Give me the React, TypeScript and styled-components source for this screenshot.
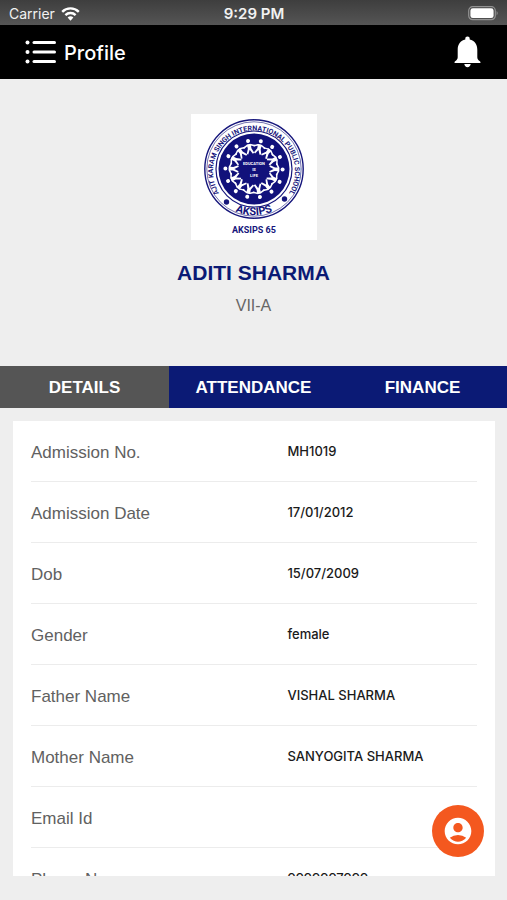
import React, { useState } from "react";
import styled, { createGlobalStyle } from "styled-components";
import { MdAccountCircle } from "react-icons/md";

const navy = "#0b1a75";
const slate = "#555555";
const sans = `"Liberation Sans", Arial, sans-serif`;
const inter = `Inter, "Liberation Sans", sans-serif`;

const GlobalStyle = createGlobalStyle`
  *, *::before, *::after { box-sizing: border-box; }
  body { margin: 0; background: #eeeeee; font-family: ${sans}; }
  button { border: 0; padding: 0; background: none; font: inherit; color: inherit; cursor: pointer; }
`;

const Page = styled.div`
  display: flex;
  flex-direction: column;
  height: 100vh;
`;

const StatusBar = styled.div`
  display: grid;
  grid-template-columns: 1fr auto 1fr;
  align-items: center;
  flex: none;
  height: 25px;
  padding: 2px 8px 0 9px;
  background: linear-gradient(#3e3e3e, #555555);
  color: #f2f2f2;
  font: 400 14px/20px ${inter};
`;

const Carrier = styled.div`
  display: flex;
  align-items: center;
  gap: 6px;
`;

const Clock = styled.time`
  font-size: 15px;
  font-weight: 600;
`;

const Battery = styled.div`
  display: flex;
  justify-content: flex-end;
`;

const Header = styled.header`
  display: flex;
  align-items: center;
  flex: none;
  gap: 8px;
  height: 54px;
  padding: 0 26px 0 25px;
  background: #000000;
  color: #ffffff;
`;

const IconButton = styled.button`
  display: flex;
`;

const Title = styled.h1`
  flex: 1;
  margin: 0;
  padding-top: 2px;
  font: 500 20px/24px ${inter};
`;

const Hero = styled.section`
  display: flex;
  flex-direction: column;
  align-items: center;
  flex: none;
  padding: 35px 16px 49px;
`;

const LogoTile = styled.div`
  display: flex;
  background: #ffffff;
`;

const StudentName = styled.h2`
  margin: 21px 0 0;
  color: ${navy};
  font: 700 21px/24px ${sans};
`;

const ClassName = styled.p`
  margin: 10px 0 0;
  color: #666666;
  font: 400 16px/22px ${sans};
`;

const Tabs = styled.div`
  display: grid;
  grid-template-columns: repeat(3, 1fr);
  flex: none;
  background: ${navy};
`;

const Tab = styled.button<{ $active: boolean }>`
  height: 42px;
  padding-top: 2px;
  background: ${(p) => (p.$active ? slate : navy)};
  color: #ffffff;
  font: 700 17px/20px ${sans};
`;

const Card = styled.dl`
  flex: 1;
  min-height: 0;
  margin: 13px 12px 24px 13px;
  padding: 0 18px;
  overflow-y: auto;
  scrollbar-width: none;
  background: #ffffff;
`;

const Row = styled.div`
  display: grid;
  grid-template-columns: 23fr 17fr;
  align-items: center;
  height: 61px;
  border-bottom: 1px solid #ececec;
`;

const Label = styled.dt`
  padding-top: 3px;
  color: #616161;
  font: 400 17px/20px ${sans};
`;

const Value = styled.dd`
  margin: 0;
  color: #1a1a1a;
  font: 500 13px/20px ${inter};
`;

const Fab = styled.button`
  position: fixed;
  right: 23px;
  bottom: 43px;
  display: flex;
  align-items: center;
  justify-content: center;
  width: 52px;
  height: 52px;
  border-radius: 50%;
  background: #f4581f;
  color: #ffffff;
`;

const WifiIcon = () => (
  <svg width="19" height="14" viewBox="0 0 19 14" fill="none" stroke="#fff" strokeWidth="2.4" aria-hidden="true">
    <path d="M1.2 4.8a11.8 11.8 0 0 1 16.6 0" />
    <path d="M4.4 8.1a7.2 7.2 0 0 1 10.2 0" />
    <path d="M6.6 10.6a4.1 4.1 0 0 1 5.8 0L9.5 13.8z" fill="#fff" stroke="none" />
  </svg>
);

const BatteryIcon = () => (
  <svg width="31" height="15" viewBox="0 0 31 15" aria-hidden="true">
    <rect x="0.7" y="0.7" width="26.6" height="13" rx="4" fill="none" stroke="#929292" strokeWidth="1.2" />
    <rect x="2.4" y="2.3" width="23.2" height="9.8" rx="2.4" fill="#fff" />
    <path d="M28.6 5q2.2 2.2 0 4.4z" fill="#929292" />
  </svg>
);

const MenuIcon = () => (
  <svg width="31" height="24" viewBox="0 0 31 24" fill="#fff" stroke="#fff" aria-hidden="true">
    {[2.5, 12, 21.5].map((y) => (
      <g key={y}>
        <circle cx="2.5" cy={y} r="2" stroke="none" />
        <path d={`M9 ${y}H29.5`} strokeWidth="3" strokeLinecap="round" />
      </g>
    ))}
  </svg>
);

const BellIcon = () => (
  <svg width="27" height="32" viewBox="0 0 27 32" fill="#fff" aria-hidden="true">
    <path d="M13.5 0.5c1.4 0 2.2.9 2.2 2.2v.8c4.9 1.1 7.6 4.9 7.6 10.2v7.5c0 1.7 1 2.8 2.6 4.1q.9.8.5 1.7H.6q-.4-.9.5-1.7c1.6-1.3 2.6-2.4 2.6-4.1v-7.5c0-5.3 2.7-9.1 7.6-10.2v-.8c0-1.3.8-2.2 2.2-2.2z" />
    <path d="M10.3 28h6.4c-.2 2-1.5 3.2-3.2 3.2s-3-1.2-3.2-3.2z" />
  </svg>
);

const SchoolLogo = () => (
  <svg width="126" height="126" viewBox="0 0 126 126" role="img" aria-label="AKSIPS school seal">
    <defs>
      <path id="ringTop" d="M32 84.4A41 41 0 1 1 94 84.4" />
      <path id="ringBottom" d="M30 87.5A46.5 46.5 0 0 0 96 87.5" />
      <g id="dancer">
        <circle cx="0" cy="-28.6" r="2" stroke="none" />
        <path d="M-6-22.4L-2-24.4H2L6-22.4" fill="none" strokeWidth="1.5" strokeLinejoin="round" />
        <path d="M-2-25.3h4l-.2 4.5L3.6-15.8 2-15.2-.2-19.6-2.6-15.4-4-16.2-1.8-21z" stroke="none" />
      </g>
    </defs>
    <g fill="none" stroke="#16167c">
      <circle cx="63" cy="55" r="49.2" strokeWidth="1.4" />
      <circle cx="63" cy="55" r="47.2" strokeWidth="0.6" />
      <circle cx="63" cy="55" r="38" strokeWidth="1.2" />
    </g>
    <circle cx="63" cy="55" r="35.5" fill="#11117b" />
    <g transform="translate(63 55)" fill="#fff" stroke="#fff">
      {Array.from({ length: 14 }, (_, i) => (
        <use key={i} href="#dancer" transform={`rotate(${(i * 360) / 14 - 12})`} />
      ))}
    </g>
    <g fill="#fff" fontFamily="Roboto, sans-serif" fontWeight="700" fontSize="4" textAnchor="middle">
      <text x="63" y="51">EDUCATION</text>
      <text x="63" y="57">IS</text>
      <text x="63" y="63">LIFE</text>
    </g>
    <g fill="#16167c" fontFamily="Roboto, sans-serif" fontWeight="700" textAnchor="middle">
      <text fontSize="7">
        <textPath href="#ringTop" startOffset="50%">AJIT KARAM SINGH INTERNATIONAL PUBLIC SCHOOL</textPath>
      </text>
      <text fontSize="11">
        <textPath href="#ringBottom" startOffset="50%">AKSIPS</textPath>
      </text>
      <circle cx="35.5" cy="88" r="2.7" />
      <circle cx="93.5" cy="85" r="2.7" />
      <text x="63" y="119" fontSize="9">AKSIPS 65</text>
    </g>
  </svg>
);

const tabs = ["DETAILS", "ATTENDANCE", "FINANCE"];

const details = [
  ["Admission No.", "MH1019"],
  ["Admission Date", "17/01/2012"],
  ["Dob", "15/07/2009"],
  ["Gender", "female"],
  ["Father Name", "VISHAL SHARMA"],
  ["Mother Name", "SANYOGITA SHARMA"],
  ["Email Id", ""],
  ["Phone No.", "9999997999"],
];

export default function App() {
  const [active, setActive] = useState("DETAILS");
  return (
    <Page>
      <GlobalStyle />
      <StatusBar>
        <Carrier>
          Carrier
          <WifiIcon />
        </Carrier>
        <Clock>9:29 PM</Clock>
        <Battery>
          <BatteryIcon />
        </Battery>
      </StatusBar>
      <Header>
        <IconButton aria-label="Menu">
          <MenuIcon />
        </IconButton>
        <Title>Profile</Title>
        <IconButton aria-label="Notifications">
          <BellIcon />
        </IconButton>
      </Header>
      <Hero>
        <LogoTile>
          <SchoolLogo />
        </LogoTile>
        <StudentName>ADITI SHARMA</StudentName>
        <ClassName>VII-A</ClassName>
      </Hero>
      <Tabs role="tablist">
        {tabs.map((tab) => (
          <Tab key={tab} role="tab" aria-selected={tab === active} $active={tab === active} onClick={() => setActive(tab)}>
            {tab}
          </Tab>
        ))}
      </Tabs>
      <Card>
        {details.map(([label, value]) => (
          <Row key={label}>
            <Label>{label}</Label>
            <Value>{value}</Value>
          </Row>
        ))}
      </Card>
      <Fab aria-label="Account">
        <MdAccountCircle size={32} />
      </Fab>
    </Page>
  );
}
